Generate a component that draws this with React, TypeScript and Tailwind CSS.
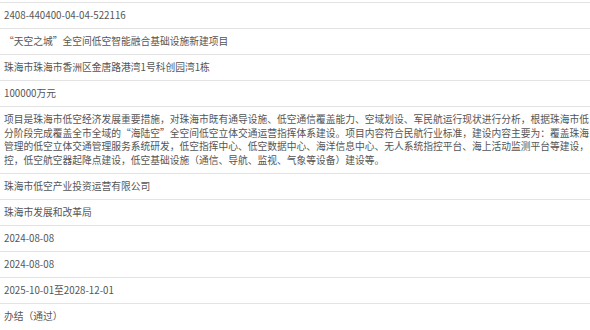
import React from 'react';

const rows: string[] = [
  '2408-440400-04-04-522116',
  '“天空之城”全空间低空智能融合基础设施新建项目',
  '珠海市珠海市香洲区金唐路港湾1号科创园湾1栋',
  '100000万元',
  '项目是珠海市低空经济发展重要措施，对珠海市既有通导设施、低空通信覆盖能力、空域划设、军民航运行现状进行分析，根据珠海市低分阶段完成覆盖全市全域的“海陆空”全空间低空立体交通运营指挥体系建设。项目内容符合民航行业标准，建设内容主要为：覆盖珠海管理的低空立体交通管理服务系统研发，低空指挥中心、低空数据中心、海洋信息中心、无人系统指控平台、海上活动监测平台等建设，控，低空航空器起降点建设，低空基础设施（通信、导航、监视、气象等设备）建设等。',
  '珠海市低空产业投资运营有限公司',
  '珠海市发展和改革局',
  '2024-08-08',
  '2024-08-08',
  '2025-10-01至2028-12-01',
  '办结（通过）',
];

const App: React.FC = () => {
  return (
    <div className="w-full h-[330px] overflow-hidden bg-white">
      <div
        lang="zh-CN"
        className="w-[595px] pt-[2px] text-[9.75px] leading-[13.5px] text-[#555]"
        style={{ fontFamily: '"Noto Sans CJK SC", "Open Sans", sans-serif' }}
      >
        {rows.map((text, i) => (
          <div
            key={i}
            className="border-t border-[#e3e3e3] py-[5.8px] pl-[4px] last:border-b"
          >
            {text}
          </div>
        ))}
      </div>
    </div>
  );
};

export default App;
